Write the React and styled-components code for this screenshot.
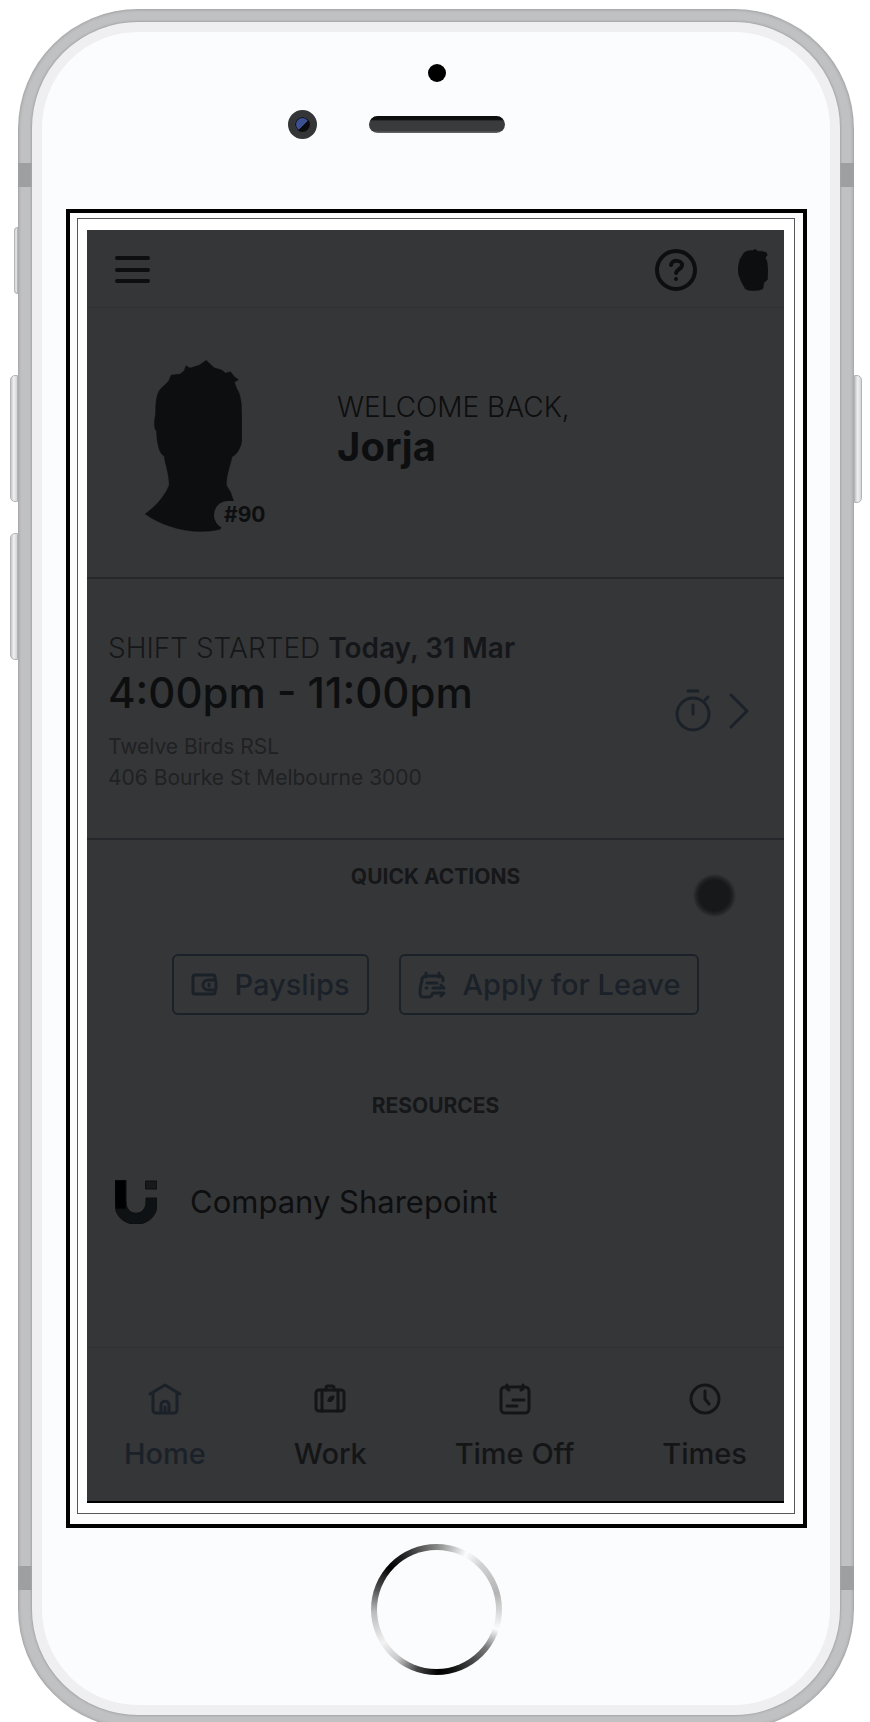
import React from "react";
import styled, { createGlobalStyle } from "styled-components";

const color = {
  screen: "#353638",
  ink: "#0d0e0f",
  soft: "#161718",
  faint: "#202123",
  blue: "#1b2129",
  line: "#26272a",
  hair: "#2f3032",
};

const GlobalStyle = createGlobalStyle`
  *, *::before, *::after { box-sizing: border-box; }
  body { margin: 0; background: #fff; font-family: Inter, "Open Sans", sans-serif; }
  h1, h2, p { margin: 0; }
  button { font: inherit; cursor: pointer; }
  a { color: inherit; text-decoration: none; }
  svg { display: block; flex: none; fill: none; stroke: currentColor; stroke-linecap: round; stroke-linejoin: round; }
`;

const Page = styled.div`
  display: grid;
  grid-template-columns: 18px 1fr 16px;
  padding-top: 9px;
  overflow: hidden;
`;

const Rail = styled.div`
  display: flex;
  flex-direction: column;
  align-items: ${(p) => (p.$side === "left" ? "flex-end" : "flex-start")};
  gap: 31px;
  padding-top: ${(p) => p.$top}px;
`;

const SideKey = styled.span`
  width: ${(p) => p.$width}px;
  height: ${(p) => p.$height}px;
  margin-bottom: ${(p) => p.$after || 0}px;
  border: 1px solid #b4b5b7;
  border-radius: ${(p) => (p.$right ? "0 5px 5px 0" : "5px 0 0 5px")};
  background: linear-gradient(90deg, #c4c5c7, #f0f0f2 45%, #d4d5d7);
`;

const Rim = styled.div`
  padding: 13px 14px 14px;
  margin-bottom: -7px;
  border-radius: 120px;
  background:
    linear-gradient(#9d9fa0, #9d9fa0) 0 154px / 100% 24px no-repeat,
    linear-gradient(#9d9fa0, #9d9fa0) 0 calc(100% - 139px) / 100% 24px no-repeat,
    #c0c1c3;
  box-shadow: inset 0 0 3px 1px #9fa0a2;
`;

const Body = styled.div`
  border: 10px solid #efeff1;
  border-radius: 106px;
  background: #fbfcfe;
  box-shadow: 0 0 2px 1px #a4a5a7;
`;

const TopBezel = styled.div`
  display: flex;
  flex-direction: column;
  align-items: center;
  gap: 28px;
  padding: 32px 0 70px 2px;
`;

const Sensor = styled.span`
  width: 18px;
  height: 18px;
  border-radius: 50%;
  background: #000;
`;

const SpeakerRow = styled.div`
  display: grid;
  grid-template-columns: 1fr 136px 1fr;
  align-items: center;
  width: 100%;
`;

const Camera = styled.span`
  justify-self: end;
  width: 29px;
  height: 29px;
  margin-right: 52px;
  border: 7px solid #343536;
  border-radius: 50%;
  background: linear-gradient(135deg, #3c4f8e 54%, #0b0b10 56%);
  box-shadow: inset 0 0 0 1px #101014;
`;

const Speaker = styled.span`
  height: 17px;
  border-radius: 9px;
  background: linear-gradient(#0c0d0d 0 20%, #3a3b3c 30% 85%, #6a6b6c);
`;

const OuterFrame = styled.div`
  margin: 0 23px 0 24px;
  padding: 5px 8px 10px 7px;
  border: 4px solid #000;
  background: #fcfcfd;
`;

const InnerFrame = styled.div`
  padding: 11px 10px 10px 9px;
  border: 1px solid #55575a;
  background: #fff;
`;

const Screen = styled.div`
  border-bottom: 2px solid #000;
  background: ${color.screen};
  color: ${color.ink};
`;

const Header = styled.header`
  display: flex;
  align-items: center;
  height: 78px;
  padding: 2px 16px 0 28px;
  border-bottom: 1px solid ${color.hair};
`;

const IconButton = styled.button`
  display: flex;
  padding: 0;
  margin-left: ${(p) => p.$gap || "0"};
  border: 0;
  background: none;
  color: ${color.ink};
`;

const Profile = styled.section`
  display: flex;
  gap: 95px;
  padding: 52px 20px 45px 58px;
  border-bottom: 2px solid ${color.line};
`;

const Avatar = styled.div`
  position: relative;
`;

const Badge = styled.span`
  position: absolute;
  left: 69px;
  top: 141px;
  padding: 0 10px;
  border-radius: 14px;
  background: ${color.screen};
  font-size: 21px;
  font-weight: 700;
  line-height: 28px;
`;

const Greeting = styled.div`
  padding-top: 27px;
`;

const Welcome = styled.p`
  font-size: 28px;
  font-weight: 300;
  line-height: 40px;
  color: ${color.ink};
  white-space: nowrap;
`;

const Name = styled.h1`
  font-size: 40px;
  font-weight: 700;
  line-height: 40px;
`;

const Shift = styled.a`
  display: flex;
  align-items: center;
  gap: 18px;
  padding: 47px 35px 45px 21px;
  border-bottom: 2px solid ${color.line};
`;

const ShiftText = styled.div`
  flex: 1;
`;

const ShiftDay = styled.p`
  font-size: 28px;
  font-weight: 300;
  line-height: 44px;
  color: ${color.soft};
  b { font-weight: 600; color: #14161a; }
`;

const ShiftHours = styled.p`
  margin-bottom: 15px;
  font-size: 42px;
  font-weight: 500;
  line-height: 46px;
`;

const Place = styled.p`
  font-size: 21px;
  line-height: 31px;
  color: ${color.faint};
`;

const BlueIcon = styled.span`
  padding-top: 2px;
  color: ${color.blue};
`;

const Main = styled.main`
  position: relative;
  padding: 24px 28px 123px;
`;

const TouchDot = styled.span`
  position: absolute;
  top: 34px;
  right: 48px;
  width: 43px;
  height: 43px;
  border-radius: 50%;
  background: radial-gradient(#17181a 50%, #222325 60%, #353638 72%);
`;

const Heading = styled.h2`
  font-size: 21px;
  font-weight: 700;
  line-height: 26px;
  text-align: center;
  color: ${color.soft};
`;

const Actions = styled.div`
  display: flex;
  justify-content: center;
  gap: 30px;
  padding: 64px 0 78px;
`;

const ActionButton = styled.button`
  display: flex;
  align-items: center;
  gap: 17px;
  height: 61px;
  padding: 0 17px;
  border: 2px solid ${color.blue};
  border-radius: 6px;
  background: none;
  color: ${color.blue};
  font-size: 29px;
  font-weight: 500;
  white-space: nowrap;
`;

const Resource = styled.a`
  display: flex;
  align-items: center;
  gap: 33px;
  margin-top: 61px;
  font-size: 31px;
  line-height: 44px;
`;

const Nav = styled.nav`
  display: flex;
  justify-content: space-between;
  padding: 35px 37px 29px;
  border-top: 1px solid ${color.hair};
`;

const NavLink = styled.a`
  display: flex;
  flex-direction: column;
  align-items: center;
  gap: 21px;
  color: ${(p) => (p.$active ? color.blue : "#141517")};
  font-size: 29px;
  font-weight: 500;
  line-height: 36px;
`;

const BottomBezel = styled.div`
  display: flex;
  justify-content: center;
  padding: 16px 0 30px;
`;

const HomeButton = styled.button`
  width: 131px;
  height: 131px;
  padding: 6px;
  border: 0;
  border-radius: 50%;
  background: conic-gradient(#858585, #fbfcfe 28deg, #d2d2d2 45deg, #b4b4b4 75deg, #fbfcfe 108deg, #777 128deg, #111 165deg, #000 178deg, #444 198deg, #c8c8c8 218deg, #f2f2f2 238deg, #bbb 268deg, #555 288deg, #000 312deg, #222 328deg, #858585);
  &::after {
    content: "";
    display: block;
    height: 100%;
    border-radius: 50%;
    background: #fbfcfe;
  }
`;

const MenuIcon = () => (
  <svg width="35" height="30" viewBox="0 0 35 30" strokeWidth="4">
    <path d="M2 3h31M2 15h31M2 26h31" />
  </svg>
);

const HelpIcon = () => (
  <svg width="42" height="42" viewBox="0 0 42 42" strokeWidth="4">
    <circle cx="21" cy="21" r="19" />
    <path d="M16 16c1-6 11-5 11 0 0 4-5 4-6 8" />
    <circle cx="21" cy="30" r="2" fill="currentColor" stroke="none" />
  </svg>
);

const HeadIcon = () => (
  <svg width="30" height="42" viewBox="505 148 90 125" stroke="none">
    <path
      fill="currentColor"
      d="M523 159C530 152 540 152 549 152L557 148 565 154 576 154 590 158 593 166 587 173 592 185 595 210 594 238 583 249 580 266C570 274 535 276 526 266L515 246 507 225C503 208 506 195 511 178Z"
    />
  </svg>
);

const Silhouette = () => (
  <svg width="97" height="172" viewBox="255 478 290 516" stroke="none">
    <path
      fill="currentColor"
      d="M255 940C280 922 316 886 327 852C326 815 314 790 312 766C298 762 290 730 289 692C279 682 283 655 286 640C286 605 289 580 300 566L325 542L333 523L360 520L372 510L377 495L390 502L418 493L438 479L462 501L485 508L496 517L511 513L523 528L535 537L523 545L530 564C542 580 545 610 545 650V720C542 742 530 762 516 768C510 795 498 825 499 854L511 874L521 902L480 986C400 1005 310 980 255 940Z"
    />
  </svg>
);

const StopwatchIcon = () => (
  <svg width="36" height="43" viewBox="0 0 36 43" strokeWidth="3">
    <circle cx="18" cy="25" r="16" />
    <path d="M13 2h10M18 16v9M30 11l3-3" />
  </svg>
);

const ChevronIcon = () => (
  <svg width="20" height="36" viewBox="0 0 20 36" strokeWidth="3">
    <path d="M2 2l16 16L2 34" />
  </svg>
);

const WalletIcon = () => (
  <svg width="27" height="24" viewBox="0 0 27 24" strokeWidth="3">
    <path d="M24 7V4a2 2 0 0 0-2-2H4a2 2 0 0 0-2 2v15a2 2 0 0 0 2 2h18a2 2 0 0 0 2-2v-2M23 7h-6a5 5 0 0 0 0 10h6a2 2 0 0 0 2-2V9a2 2 0 0 0-2-2z" />
    <path d="M18 11v2" />
  </svg>
);

const LeaveIcon = () => (
  <svg width="28" height="28" viewBox="0 0 28 28" strokeWidth="3">
    <path d="M4 10a4 4 0 0 1 4-5h14a3 3 0 0 1 3 3v2M4 10c-2 5-2 10-2 13a3 3 0 0 0 3 3h6a3 3 0 0 0 3-3M8 2v4M21 2v4M9 12h10M8 17h1M26 17H15M23 14l3 3M15 22h11l-3 3" />
  </svg>
);

const Logo = () => (
  <svg width="42" height="44" viewBox="0 0 42 44" stroke="none">
    <path fill="#0f1214" d="M0 22h11c0 15 20 15 20 0v-4h11v6c0 27-42 27-42 0z" />
    <path fill="#010101" d="M0 0h11v29H1L0 24z" />
    <path fill="#17191b" d="M31 1h11v8H31z" />
  </svg>
);

const HomeIcon = () => (
  <svg width="34" height="32" viewBox="0 0 34 32" strokeWidth="3">
    <path d="M2 11L17 2l15 9M5 10v17a3 3 0 0 0 3 3h18a3 3 0 0 0 3-3V10M13 30v-8c0-5 8-5 8 0v8M17 24v6" />
  </svg>
);

const WorkIcon = () => (
  <svg width="32" height="32" viewBox="0 0 32 32" strokeWidth="3">
    <rect x="2" y="7" width="28" height="21" rx="3" />
    <path d="M8 7v21M24 7v21M12 7V5a2 2 0 0 1 2-2h4a2 2 0 0 1 2 2v2" />
    <path d="M14 18c0-4 3-5 6-5 0 4-3 7-6 5z" fill="currentColor" strokeWidth="1" />
  </svg>
);

const CalendarIcon = () => (
  <svg width="32" height="32" viewBox="0 0 32 32" strokeWidth="3">
    <rect x="2" y="4" width="28" height="26" rx="4" />
    <path d="M8 2v4l2 1M24 2v4l-2 1M14 17h11M8 23h10" />
  </svg>
);

const ClockIcon = () => (
  <svg width="32" height="32" viewBox="0 0 32 32" strokeWidth="3">
    <circle cx="16" cy="16" r="14" />
    <path d="M16 8v8l4 5" />
  </svg>
);

const navItems = [
  { label: "Home", Icon: HomeIcon, active: true },
  { label: "Work", Icon: WorkIcon },
  { label: "Time Off", Icon: CalendarIcon },
  { label: "Times", Icon: ClockIcon },
];

export default function App() {
  return (
    <>
      <GlobalStyle />
      <Page>
        <Rail $side="left" $top={218}>
          <SideKey $width={4} $height={67} $after={50} />
          <SideKey $width={8} $height={127} />
          <SideKey $width={8} $height={127} />
        </Rail>
        <Rim>
          <Body>
            <TopBezel>
              <Sensor />
              <SpeakerRow>
                <Camera />
                <Speaker />
              </SpeakerRow>
            </TopBezel>
            <OuterFrame>
              <InnerFrame>
                <Screen>
                  <Header>
                    <IconButton aria-label="Menu">
                      <MenuIcon />
                    </IconButton>
                    <IconButton aria-label="Help" $gap="auto">
                      <HelpIcon />
                    </IconButton>
                    <IconButton aria-label="Account" $gap="41px">
                      <HeadIcon />
                    </IconButton>
                  </Header>
                  <Profile>
                    <Avatar>
                      <Silhouette />
                      <Badge>#90</Badge>
                    </Avatar>
                    <Greeting>
                      <Welcome>WELCOME BACK,</Welcome>
                      <Name>Jorja</Name>
                    </Greeting>
                  </Profile>
                  <Shift href="#shift">
                    <ShiftText>
                      <ShiftDay>
                        SHIFT STARTED <b>Today, 31 Mar</b>
                      </ShiftDay>
                      <ShiftHours>4:00pm - 11:00pm</ShiftHours>
                      <Place>Twelve Birds RSL</Place>
                      <Place>406 Bourke St Melbourne 3000</Place>
                    </ShiftText>
                    <BlueIcon>
                      <StopwatchIcon />
                    </BlueIcon>
                    <BlueIcon>
                      <ChevronIcon />
                    </BlueIcon>
                  </Shift>
                  <Main>
                    <TouchDot />
                    <Heading>QUICK ACTIONS</Heading>
                    <Actions>
                      <ActionButton>
                        <WalletIcon />
                        Payslips
                      </ActionButton>
                      <ActionButton>
                        <LeaveIcon />
                        Apply for Leave
                      </ActionButton>
                    </Actions>
                    <Heading>RESOURCES</Heading>
                    <Resource href="#sharepoint">
                      <Logo />
                      Company Sharepoint
                    </Resource>
                  </Main>
                  <Nav>
                    {navItems.map(({ label, Icon, active }) => (
                      <NavLink key={label} href={`#${label}`} $active={active}>
                        <Icon />
                        {label}
                      </NavLink>
                    ))}
                  </Nav>
                </Screen>
              </InnerFrame>
            </OuterFrame>
            <BottomBezel>
              <HomeButton aria-label="Home button" />
            </BottomBezel>
          </Body>
        </Rim>
        <Rail $side="right" $top={366}>
          <SideKey $right $width={8} $height={128} />
        </Rail>
      </Page>
    </>
  );
}
